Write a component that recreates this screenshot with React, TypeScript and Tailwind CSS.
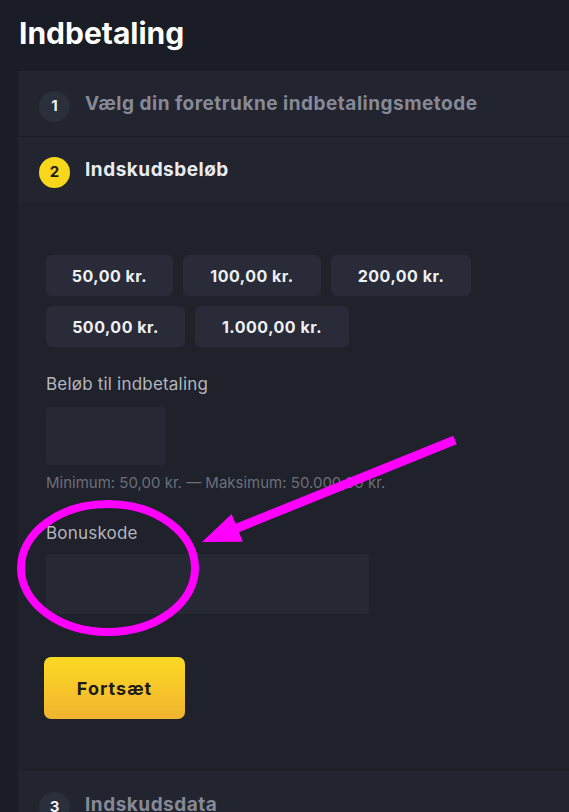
import React from "react";

const amounts: { label: string; w: string }[] = [
  { label: "50,00 kr.", w: "w-[127px]" },
  { label: "100,00 kr.", w: "w-[138px]" },
  { label: "200,00 kr.", w: "w-[140px]" },
  { label: "500,00 kr.", w: "w-[139px]" },
  { label: "1.000,00 kr.", w: "w-[154px]" },
];

function StepHeader({
  n,
  title,
  active,
  border,
  h,
}: {
  n: string;
  title: string;
  active?: boolean;
  border?: boolean;
  h: string;
}) {
  return (
    <div
      className={
        "flex items-center gap-[15px] bg-[#22242f] pl-[21px] " +
        h +
        (border ? " border-b border-[#1b1d26]" : "")
      }
    >
      <div
        className={
          "flex h-[31px] w-[31px] translate-y-[3px] items-center justify-center rounded-full text-[15px] font-bold " +
          (active ? "bg-[#f8d61c] text-[#1c1c1c]" : "bg-[#2b2e3b] text-[#eef0f4]")
        }
      >
        {n}
      </div>
      <div
        className={
          "translate-y-[1px] text-[19px] font-bold tracking-[0.5px] " +
          (active ? "text-[#e9ebef]" : "text-[#868996]")
        }
      >
        {title}
      </div>
    </div>
  );
}

export default function App() {
  return (
    <div className="relative h-[812px] w-[569px] overflow-hidden bg-[#1b1d26] font-['Inter',sans-serif]">
      <h1 className="pl-[19px] pt-[15px] text-[30px] font-bold leading-[36px] text-white">Indbetaling</h1>
      <div className="ml-[18px] mt-[20px]">
        <StepHeader n="1" title="Vælg din foretrukne indbetalingsmetode" border h="h-[66px]" />
        <StepHeader n="2" title="Indskudsbeløb" active h="h-[65px]" />
        <div className="bg-[#1f212b] pb-[52px] pl-[28px] pt-[53px]">
          <div className="flex w-[520px] flex-wrap gap-[10px]">
            {amounts.map((a) => (
              <div
                key={a.label}
                className={
                  "flex h-[41px] items-center justify-center rounded-[6px] bg-[#292c38] text-[16px] font-bold tracking-[0.5px] text-[#eef0f4] " +
                  a.w
                }
              >
                {a.label}
              </div>
            ))}
          </div>
          <div className="mt-[25px] text-[17px] leading-[24px] tracking-[0.2px] text-[#b3b5be]">
            Beløb til indbetaling
          </div>
          <div className="mt-[11px] h-[58px] w-[120px] rounded-[3px] bg-[#262833]" />
          <div className="mt-[8px] text-[15px] leading-[20px] text-[#6c6f7a]">
            Minimum: 50,00 kr. — Maksimum: 50.000,00 kr.
          </div>
          <div className="mt-[28px] text-[17px] leading-[24px] tracking-[0.2px] text-[#b3b5be]">Bonuskode</div>
          <div className="mt-[9px] h-[60px] w-[323px] rounded-[3px] bg-[#262833]" />
          <button className="-ml-[2px] mt-[43px] flex h-[62px] w-[141px] items-center justify-center rounded-[7px] bg-gradient-to-b from-[#fcd923] to-[#f0b42e] text-[18px] font-bold tracking-[1px] text-[#1e1c19]">
            Fortsæt
          </button>
        </div>
        <StepHeader n="3" title="Indskudsdata" h="h-[66px]" />
      </div>

      <svg className="pointer-events-none absolute left-0 top-0" width="569" height="812" viewBox="0 0 569 812">
        <ellipse cx="108" cy="568" rx="87" ry="64" fill="none" stroke="#ff00ff" strokeWidth="8" />
        <line x1="455" y1="440" x2="236" y2="528.5" stroke="#ff00ff" strokeWidth="9" strokeLinecap="butt" />
        <polygon points="202,542 231.6,513.9 242.8,541.7" fill="#ff00ff" />
      </svg>
    </div>
  );
}
